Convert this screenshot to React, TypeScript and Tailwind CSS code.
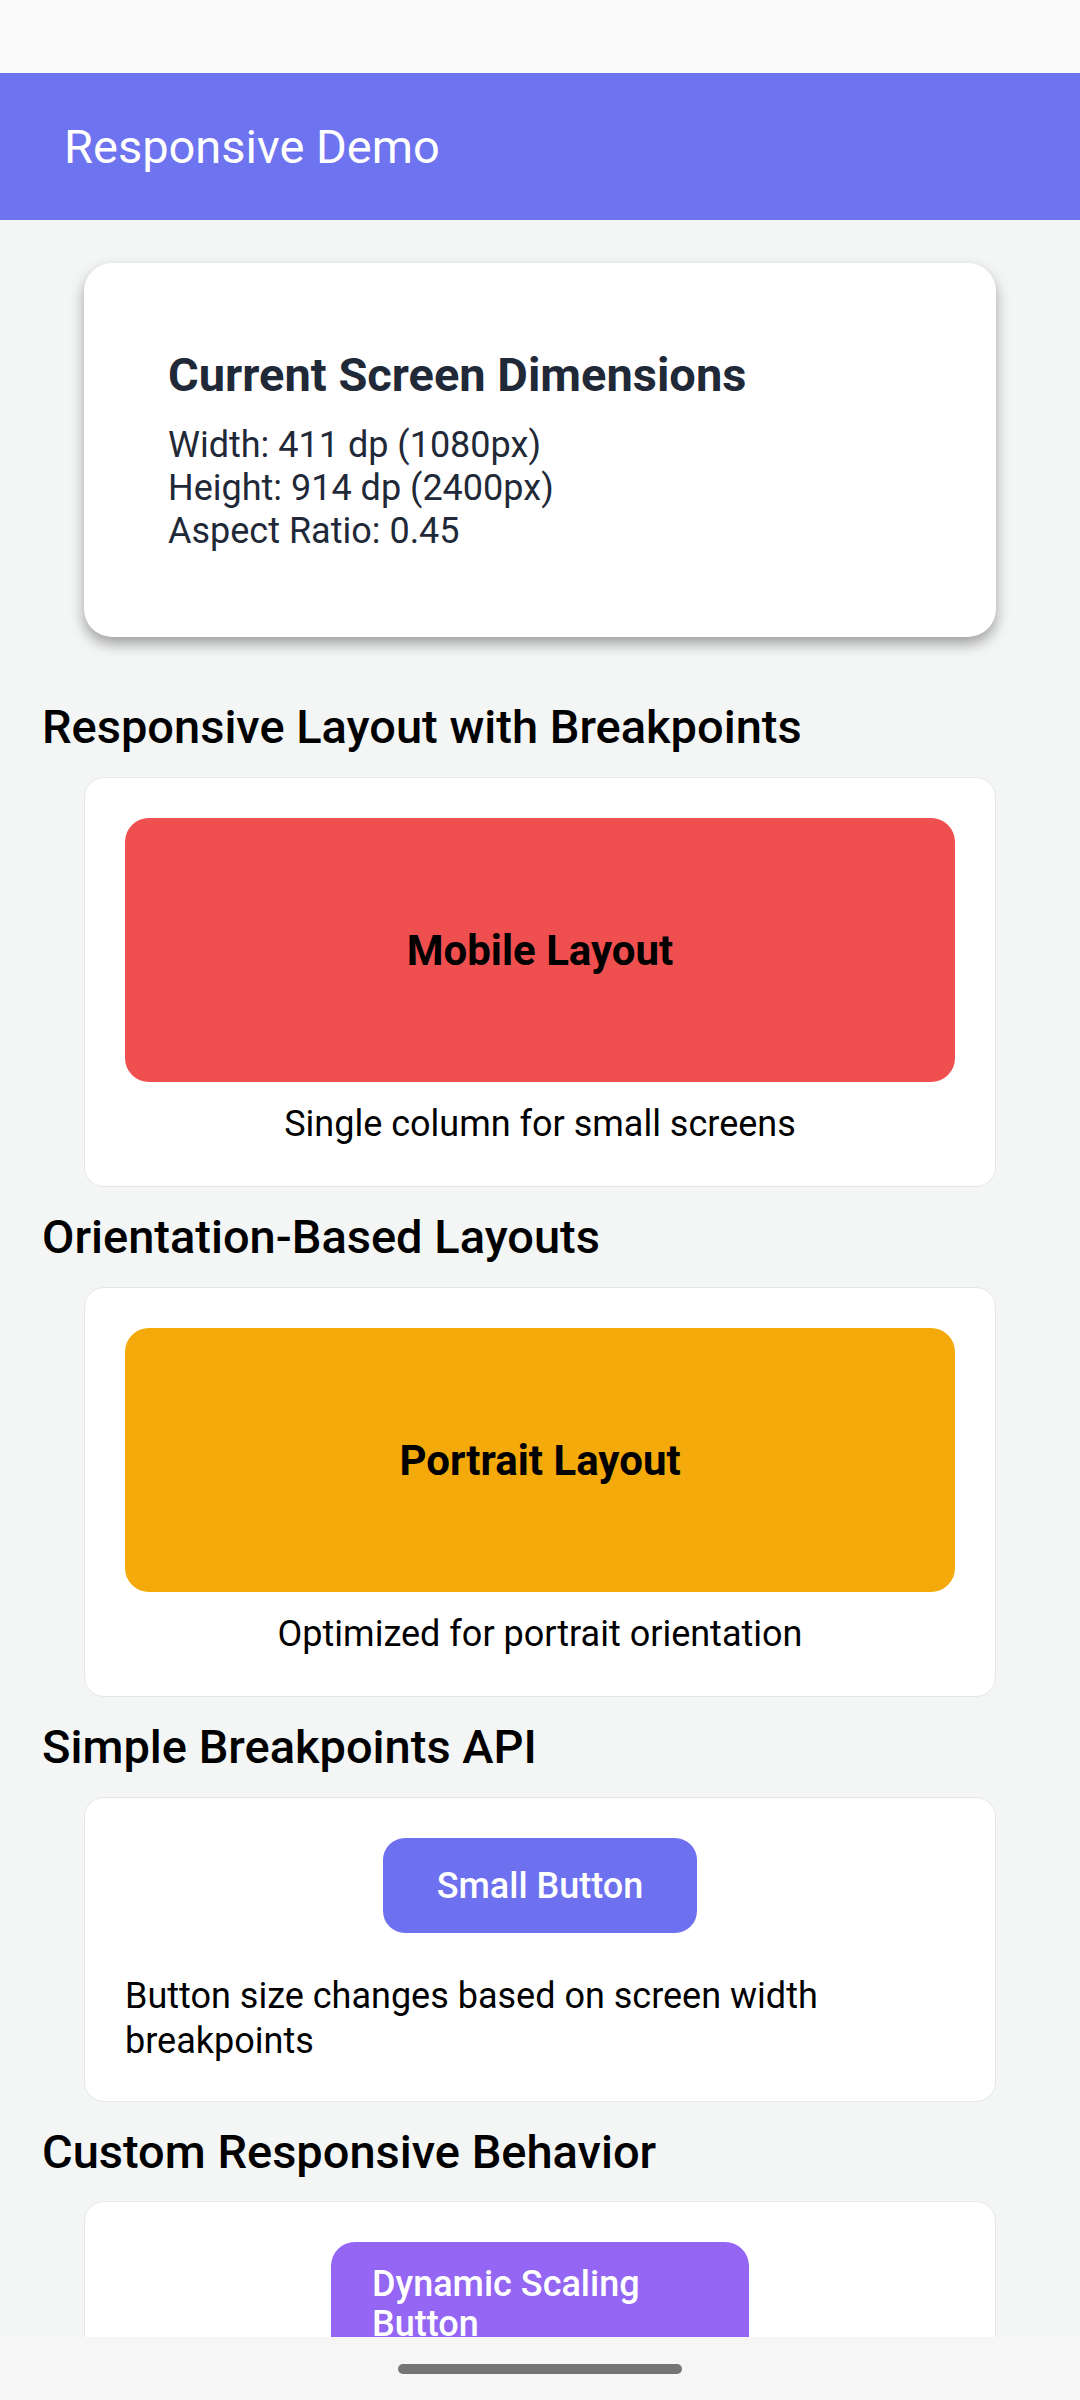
// Responsive Demo — tela de demonstração de layouts responsivos

const sectionTitle = 'text-[47px] leading-[56px] font-medium text-black mt-[22px] mb-[22px]'
const demoCard = 'mx-[42px] bg-white border border-[#e5e7eb] rounded-[20px]'

const SectionTitle = ({ children, className = '' }: { children: React.ReactNode; className?: string }) => (
  <h2 className={`${sectionTitle} ${className}`}>{children}</h2>
)

const App = () => {
  return (
    <div
      className="w-[1080px] h-[2400px] flex flex-col overflow-hidden bg-[#f4f5f5]"
      style={{ fontFamily: 'Roboto, "Noto Sans", "Liberation Sans", sans-serif' }}
    >
      {/* Status bar */}
      <div className="h-[73px] shrink-0 bg-[#fafafa]" />

      {/* App bar */}
      <header className="h-[147px] shrink-0 bg-[#6e73f0] flex items-center px-[64px]">
        <h1 className="text-white text-[47px] font-normal leading-none">Responsive Demo</h1>
      </header>

      {/* Conteúdo */}
      <main className="flex-1 overflow-hidden px-[42px]">
        <div className="mt-[43px] mx-[42px] bg-white rounded-[28px] p-[84px] shadow-[0_7px_14px_rgba(0,0,0,0.35)]">
          <h3 className="text-[47px] leading-[56px] font-bold text-[#1f2937]">Current Screen Dimensions</h3>
          <div className="mt-[21px] text-[36px] leading-[43px] text-[#1f2937]">
            <p>Width: 411 dp (1080px)</p>
            <p>Height: 914 dp (2400px)</p>
            <p>Aspect Ratio: 0.45</p>
          </div>
        </div>

        <SectionTitle className="!mt-[62px]">Responsive Layout with Breakpoints</SectionTitle>
        <div className={`${demoCard} p-[40px]`}>
          <div className="h-[264px] rounded-[24px] bg-[#ef4f4f] flex items-center justify-center">
            <span className="text-[42px] font-bold text-black">Mobile Layout</span>
          </div>
          <p className="mt-[21px] text-[36px] leading-[43px] text-black text-center">Single column for small screens</p>
        </div>

        <SectionTitle>Orientation-Based Layouts</SectionTitle>
        <div className={`${demoCard} p-[40px]`}>
          <div className="h-[264px] rounded-[24px] bg-[#f4aa0a] flex items-center justify-center">
            <span className="text-[42px] font-bold text-black">Portrait Layout</span>
          </div>
          <p className="mt-[21px] text-[36px] leading-[43px] text-black text-center">Optimized for portrait orientation</p>
        </div>

        <SectionTitle>Simple Breakpoints API</SectionTitle>
        <div className={`${demoCard} px-[40px] pt-[40px] pb-[37px]`}>
          <div className="flex justify-center">
            <button className="h-[95px] px-[54px] rounded-[22px] bg-[#6e71ef] text-white text-[36px] font-medium">
              Small Button
            </button>
          </div>
          <p className="mt-[41px] text-[36px] leading-[45px] text-black">
            Button size changes based on screen width breakpoints
          </p>
        </div>

        <SectionTitle className="!mb-[21px]">Custom Responsive Behavior</SectionTitle>
        <div className={`${demoCard} p-[40px]`}>
          <div className="flex justify-center">
            <button className="w-[418px] px-[41px] py-[22px] rounded-[24px] bg-[#9466f3] text-white text-[36px] leading-[40px] font-medium text-left">
              Dynamic Scaling Button
            </button>
          </div>
        </div>
      </main>

      {/* Barra de navegação por gestos */}
      <div className="h-[63px] shrink-0 bg-[#f6f6f6] flex justify-center pt-[27px]">
        <div className="w-[284px] h-[10px] rounded-full bg-[#757575]" />
      </div>
    </div>
  )
}

export default App
